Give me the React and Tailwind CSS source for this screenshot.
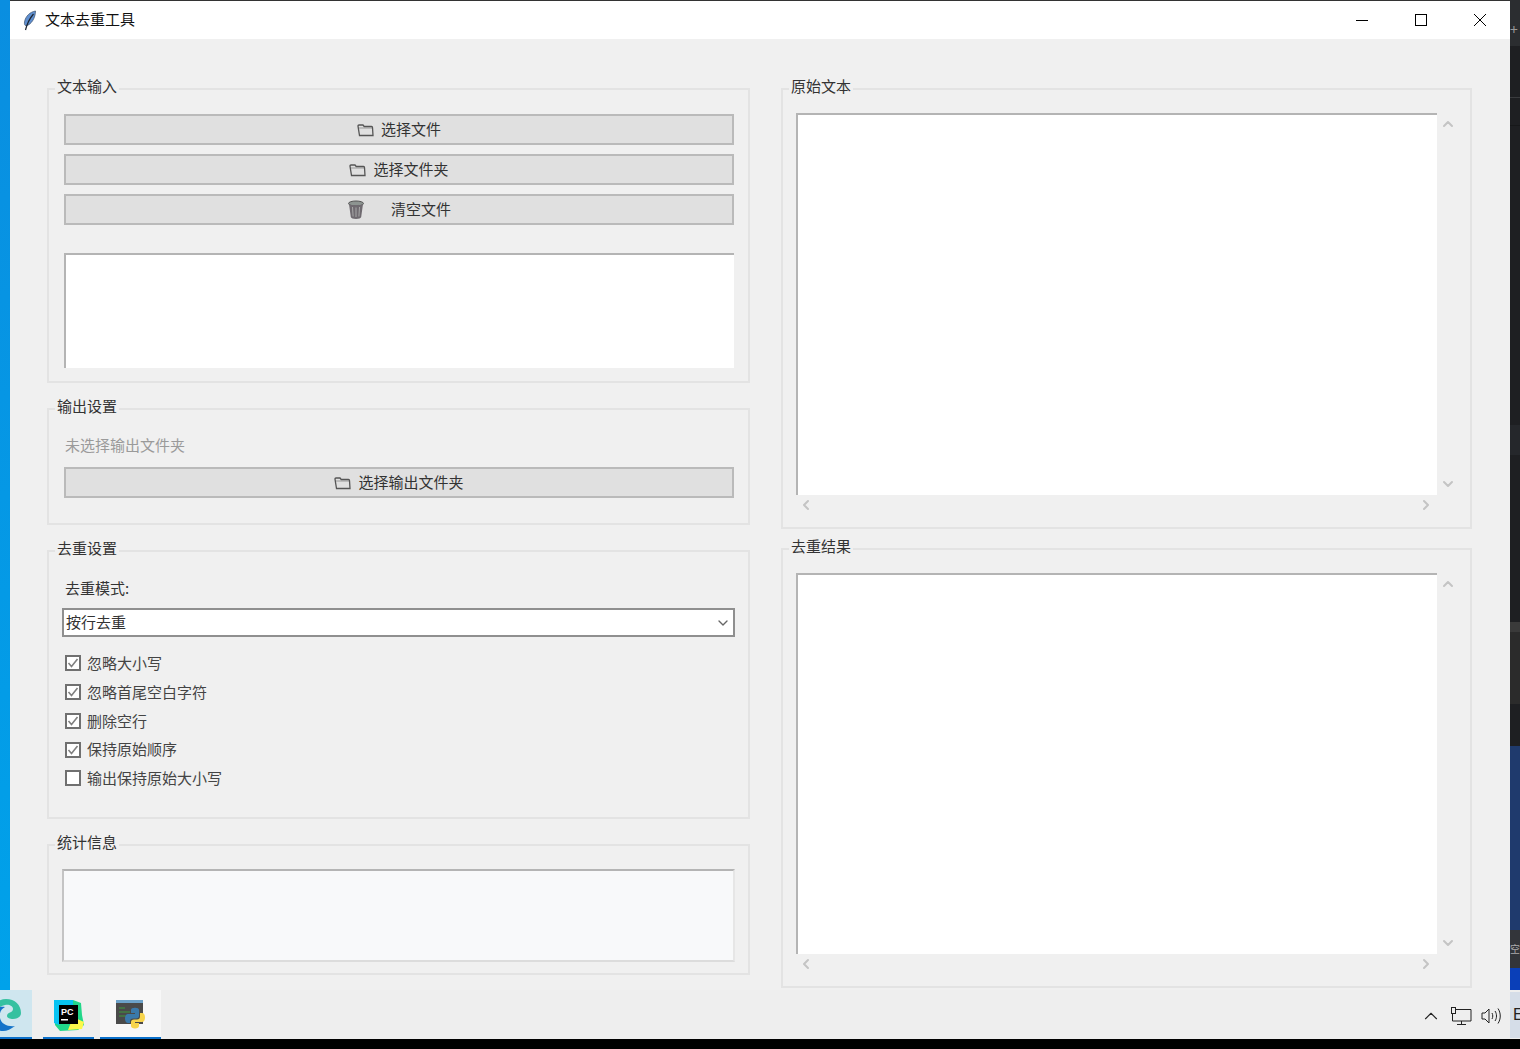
import { ChevronUp, ChevronDown, ChevronLeft, ChevronRight } from "lucide-react";

const FONT = "font-['Noto_Sans_CJK_SC','Noto_Sans',sans-serif]";

function FolderIcon() {
  return (
    <svg width="18" height="14" viewBox="0 0 18 14" fill="none" stroke="#555" strokeWidth="1.3">
      <path d="M2.500 12.500 1 3.200c0-.8.400-1.200 1-1.200h4l1.200 1.500h7.300c.7 0 1 .4 1 1l.5 8z" />
      <path d="M1.500 5h14" strokeOpacity="0.4" />
    </svg>
  );
}

function TrashIcon() {
  return (
    <svg width="18" height="20" viewBox="0 0 18 20">
      <ellipse cx="9" cy="3.500" rx="7.500" ry="2.500" fill="#8d9491" stroke="#555" />
      <path d="M2 4l1.800 13c.2 1.200 2.500 2 5.200 2s5-.8 5.200-2L16 4c-1.500 1.600-12.500 1.600-14 0z" fill="#6f6a70" />
      <path d="M5.500 7l.6 9.500M9 7.500v9.500M12.500 7l-.6 9.500" stroke="#a8a8a8" strokeWidth="1" />
    </svg>
  );
}

function FeatherIcon() {
  return (
    <svg width="14" height="21" viewBox="0 0 14 21">
      <path d="M12.500 1C7 2 2.500 6 1.500 12c-.3 2 .2 3.500 1.500 3.800C8 15 12.500 8 12.500 1z" fill="#5f8fd0" stroke="#3b4f68" strokeWidth="0.7" />
      <path d="M10.500 4C7 8 4.500 12 2.500 20" stroke="#1b2430" strokeWidth="1.200" fill="none" />
    </svg>
  );
}

function Panel({ title, className, children }) {
  return (
    <fieldset className={`border-2 border-[#e3e3e3] min-w-0 ${className}`}>
      <legend className="ml-[6px] px-0.5 text-[15px] leading-5 h-5 text-[#333]">
        <span className="relative -top-[3px]">{title}</span>
      </legend>
      {children}
    </fieldset>
  );
}

function ActionButton({ icon, gap = "gap-[6px]", children }) {
  return (
    <button className={`w-full h-[31px] bg-[#e0e0e0] border-2 border-[#bababa] flex items-center justify-center ${gap} text-[15px] text-[#333]`}>
      {icon}
      <span>{children}</span>
    </button>
  );
}

function CheckRow({ checked, children }) {
  return (
    <label className="flex items-center h-[28.75px] gap-[6px] pl-[3px] text-[15px] text-[#444]">
      <span className="w-4 h-4 border-2 border-[#707070] bg-white flex items-center justify-center shrink-0">
        {checked && (
          <svg width="12" height="12" viewBox="0 0 12 12" fill="none" stroke="#808080" strokeWidth="1.600">
            <path d="M1.500 6l3 3.500 6-7.500" />
          </svg>
        )}
      </span>
      {children}
    </label>
  );
}

// white text pane with a scrollbar on the right and under it
function TextPane({ boxHeight }) {
  const chevron = "text-[#c4c4c4]";
  return (
    <div className="mt-[14px] ml-[13px] w-[662px]">
      <div className="flex">
        <div className={`w-[641px] shrink-0 ${boxHeight} bg-white border-t-2 border-l-2 border-t-[#b4b4b4] border-l-[#b4b4b4]`} />
        <div className="w-[21px] flex flex-col justify-between items-center pt-[3px] pb-[3px]">
          <ChevronUp size={16} strokeWidth={3} className={chevron} />
          <ChevronDown size={16} strokeWidth={3} className={chevron} />
        </div>
      </div>
      <div className="h-[20px] w-[640px] flex justify-between items-center px-[2px]">
        <ChevronLeft size={16} strokeWidth={3} className={chevron} />
        <ChevronRight size={16} strokeWidth={3} className={chevron} />
      </div>
    </div>
  );
}

function EdgeIcon() {
  return (
    <svg width="22" height="32" viewBox="0 0 22 32">
      <path d="M-10 16C-10 6-2 0 6 0c9 0 15 6 15 14 0 4-4 6-8 6-3 0-6-1-6-3 0-4 6-3 6-7 0-3-4-5-8-4-5 1-9 5-15 10z" fill="#35c1a0" />
      <path d="M-10 16C-6 9 0 7 5 8c-4 2-6 6-5 11 1 6 8 9 15 8-4 3-8 5-12 5-8 0-13-7-13-16z" fill="#1473c9" />
    </svg>
  );
}

function PyCharmIcon() {
  return (
    <svg width="32" height="32" viewBox="0 0 32 32">
      <path d="M1 1h19l8 3 1 12 2 10-6 5-18 1-5-6z" fill="#21d789" />
      <path d="M1 1h19v8L6 26 1 24z" fill="#07c3f2" />
      <path d="M20 18l11 5-2 7-14 1z" fill="#fcf84a" />
      <rect x="6" y="6" width="19" height="19" fill="#000" />
      <text x="8" y="16" fill="#fff" fontSize="9" fontWeight="700" fontFamily="'Liberation Sans',sans-serif">PC</text>
      <rect x="8" y="20" width="7" height="1.500" fill="#fff" />
    </svg>
  );
}

function PythonConsoleIcon() {
  return (
    <svg width="29" height="30" viewBox="0 0 29 30">
      <rect x="0" y="1" width="27" height="23" fill="#4a4a4a" />
      <rect x="0" y="0" width="27" height="3" fill="#6da2c9" />
      <path d="M3 8h6M3 12h11M3 16h8" stroke="#3d9a3d" strokeWidth="1.200" />
      <path d="M15 10c0-1.500 1.500-2.200 4-2.200s4 .7 4 2.200v6c0 1.500-1 2.500-3 2.500h-3c-2 0-3 1-3 3v1.500h-2c-2 0-3-2-3-4.500s1-4.500 3-4.500h7v-1h-4z" fill="#3a79ab" />
      <path d="M24 13h2c2 0 3 2 3 4.500S28 22 26 22h-7v1h4v3c0 1.500-1.500 2.500-4 2.500s-4-1-4-2.500v-4c0-1.500 1-2.500 3-2.500h3c2 0 3-1 3-3z" fill="#f7d44c" />
    </svg>
  );
}

function NetworkIcon() {
  return (
    <svg width="21" height="18" viewBox="0 0 21 18" fill="none" stroke="#222" strokeWidth="1">
      <path d="M3.500 2.500h16.500v11.500H1.500V3.500" />
      <rect x="0.500" y="0.500" width="4" height="6" fill="#eee" />
      <path d="M2.500 2.500h0" />
      <path d="M10.500 14v3M6 17.500h9" />
    </svg>
  );
}

function VolumeIcon() {
  return (
    <svg width="21" height="18" viewBox="0 0 21 18" fill="none" stroke="#222" strokeWidth="1">
      <path d="M1 6h3l4-4v14l-4-4H1z" />
      <path d="M11 6c1 2 1 4 0 6M14 4c2 3 2 7 0 10M17 1.500c3 4.500 3 10.500 0 15" />
    </svg>
  );
}

function TaskSlot({ className, active, children }) {
  return (
    <div className={`h-full flex items-center justify-center pt-[2px] border-b-2 border-[#0a6fc9] ${active ? "bg-[#f7f7f7]" : ""} ${className}`}>
      {children}
    </div>
  );
}

export default function App() {
  return (
    <div className={`w-[1520px] h-[1049px] flex flex-col overflow-hidden bg-black ${FONT}`}>
      <div className="flex h-[990px]">
        <div className="w-[10px] bg-gradient-to-b from-[#0a8ee0] to-[#00a2ea]" />

        <div className="w-[1500px] flex flex-col bg-[#f0f0f0]">
          <div className="h-[39px] shrink-0 bg-white border-t border-[#333] flex items-center">
            <div className="ml-[13px] w-[22px]"><FeatherIcon /></div>
            <span className="text-[15px] text-[#111] pb-[2px]">文本去重工具</span>
            <div className="ml-auto mr-px flex items-center text-black">
              <div className="w-[59px] flex justify-center">
                <div className="w-3 h-px bg-black" />
              </div>
              <div className="w-[59px] flex justify-center">
                <div className="w-3 h-3 border border-black" />
              </div>
              <div className="w-[59px] flex justify-center">
                <svg width="12" height="12" viewBox="0 0 12 12" stroke="#000" strokeWidth="1">
                  <path d="M0 0l12 12M12 0L0 12" />
                </svg>
              </div>
            </div>
          </div>

          <div className="flex gap-[31px] pl-[37px] pt-[40px] overflow-hidden">
            <div className="w-[703px] flex flex-col gap-4">
              <Panel title="文本输入" className="h-[304px]">
                <div className="pt-[15px] pl-[15px] pr-[14px] flex flex-col gap-[9px]">
                  <ActionButton icon={<FolderIcon />}>选择文件</ActionButton>
                  <ActionButton icon={<FolderIcon />}>选择文件夹</ActionButton>
                  <ActionButton icon={<TrashIcon />} gap="gap-[26px]">清空文件</ActionButton>
                  <div className="mt-[19px] h-[115px] bg-white border-t-2 border-l-2 border-t-[#b4b4b4] border-l-[#b4b4b4]" />
                </div>
              </Panel>

              <Panel title="输出设置" className="h-[126px]">
                <div className="pl-[15px] pr-[14px]">
                  <div className="h-[30px] mt-[11px] text-[15px] text-[#9a9a9a] flex items-center pl-px">未选择输出文件夹</div>
                  <div className="mt-[7px]">
                    <ActionButton icon={<FolderIcon />}>选择输出文件夹</ActionButton>
                  </div>
                </div>
              </Panel>

              <Panel title="去重设置" className="h-[278px]">
                <div className="pl-[13px] pr-[13px]">
                  <div className="pl-[3px] mt-[12px] h-[30px] flex items-center text-[15px] text-[#333]">去重模式:</div>
                  <div className="mt-[5px] h-[29px] bg-white border-2 border-[#8f8f8f] flex items-center pl-[2px] pr-[2px] text-[15px] text-[#333]">
                    按行去重
                    <ChevronDown size={16} strokeWidth={2} className="ml-auto text-[#666]" />
                  </div>
                  <div className="mt-[12px] flex flex-col">
                    <CheckRow checked>忽略大小写</CheckRow>
                    <CheckRow checked>忽略首尾空白字符</CheckRow>
                    <CheckRow checked>删除空行</CheckRow>
                    <CheckRow checked>保持原始顺序</CheckRow>
                    <CheckRow>输出保持原始大小写</CheckRow>
                  </div>
                </div>
              </Panel>

              <Panel title="统计信息" className="h-[140px]">
                <div className="mt-[14px] mx-[13px] h-[93px] bg-[#f8f9fa] border-2 border-t-[#b4b4b4] border-l-[#c4c4c4] border-r-[#e6e6e6] border-b-[#dcdcdc]" />
              </Panel>
            </div>

            <div className="w-[691px] flex flex-col gap-[10px]">
              <Panel title="原始文本" className="h-[450px]">
                <TextPane boxHeight="h-[382px]" />
              </Panel>
              <Panel title="去重结果" className="h-[449px]">
                <TextPane boxHeight="h-[381px]" />
              </Panel>
            </div>
          </div>
        </div>

        {/* editor behind the window */}
        <div className="w-[10px] bg-[#1e1f22] flex flex-col">
          <div className="h-[46px] bg-[#2b2d30] text-[#999] text-sm leading-[58px] overflow-hidden">+</div>
          <div className="h-[52px] border-b border-[#3a3b3e]" />
          <div className="h-[28px] border-b border-[#17181a]" />
          <div className="h-[299px]" />
          <div className="h-[30px] bg-[#25272b]" />
          <div className="h-[167px]" />
          <div className="h-[10px] bg-[#3a3a3a]" />
          <div className="h-[72px] bg-[#2b2b2b]" />
          <div className="h-[42px]" />
          <div className="flex-1 bg-[#1f3a6d]" />
          <div className="h-[38px] bg-[#33353a] text-[10px] leading-[38px] text-[#aaa] overflow-hidden">空</div>
          <div className="h-[22px] bg-[#0a3fb8]" />
        </div>
      </div>

      <div className="h-[49px] bg-[#eeeeee] flex items-stretch">
        <TaskSlot className="w-[32px] justify-start bg-[#cfe6ef]"><EdgeIcon /></TaskSlot>
        <TaskSlot className="w-[51px] ml-[11px]"><PyCharmIcon /></TaskSlot>
        <TaskSlot className="w-[61px] ml-[6px]" active><PythonConsoleIcon /></TaskSlot>
        <div className="ml-auto flex items-center gap-[9px] pt-[3px] text-[#222]">
          <ChevronUp size={22} strokeWidth={1.200} />
          <NetworkIcon />
          <VolumeIcon />
          <span className="text-[16px] w-[10px] h-full flex items-center pl-[3px] overflow-hidden bg-[#d5dde8] -mt-[3px] ml-[-1px] font-['Liberation_Sans',sans-serif]">E</span>
        </div>
      </div>
      <div className="h-[10px] bg-black" />
    </div>
  );
}
